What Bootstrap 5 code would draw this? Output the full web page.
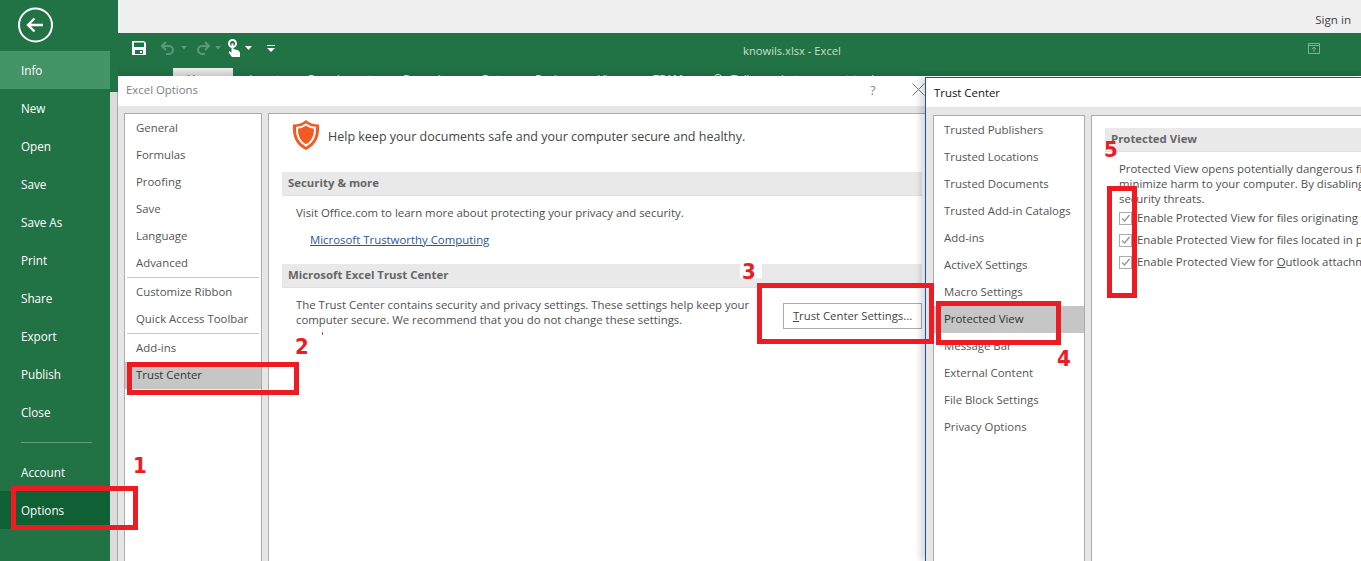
<!DOCTYPE html>
<html lang="en">
<head>
<meta charset="utf-8">
<title>Excel Options - Trust Center</title>
<link href="https://cdn.jsdelivr.net/npm/bootstrap@5.3.0/dist/css/bootstrap.min.css" rel="stylesheet">
<style>
html,body{height:100%;overflow:hidden;background:#fff}
body{font-family:"Open Sans","Noto Sans",sans-serif;font-size:11.4px;color:#444}
.xl-app{width:1361px;height:561px;overflow:hidden}
.xl-side{width:110px;background:#217346;color:#fff}
.xl-back{height:51px;padding-left:17px}
.xl-menu{height:38px;line-height:38px;padding:0 0 0 21px;color:#fff;font-size:11.7px}
.xl-menu-on{background:#439467}
.xl-menu-sel{background:#0f6034}
.xl-rule{height:1px;background:#5f9f7c;margin:11px 18px 10px 21px}
.xl-strip{width:8px}
.xl-strip-top{height:92px;background:#217346}
.xl-strip-low{flex:1;background:#dcdcdc;border-right:1px solid #a8a8a8}
.xl-top{height:33px;background:#f0f0f0;padding:0 10px 5px 0;color:#444;font-size:11.6px}
.xl-title{height:35px;background:#217346;padding:0 0 5px 13px}
.xl-doc{left:743px;top:43px;color:#c9dfd1;font-size:11.2px}
.xl-q1{margin-left:13px}
.xl-q2{margin-left:5px}
.xl-q3{margin-left:8px}
.xl-q4{margin-left:4px}
.xl-q5{margin-left:6px}
.xl-q6{margin-left:15px;margin-top:2px}
.xl-ribbon{height:8px;background:linear-gradient(#217346,#1d683f);overflow:hidden;font-size:11.4px;color:#d6e6dc;padding-left:55px}
.xl-tab{height:8px;line-height:22px;flex:0 0 auto}
.xl-tab-on{background:linear-gradient(#ececec,#c9c9c9);color:#444;width:60px;text-align:center;margin-right:16px}
.xl-t59{width:59px}
.xl-t95{width:95px}
.xl-t79{width:79px}
.xl-t53{width:53px}
.xl-t63{width:63px}
.xl-t55{width:55px}
.xl-search{width:10px;height:10px;border:1px solid #d6e6dc;border-radius:50%;margin:6px 8px 0 1px;flex:0 0 auto}
.xl-win{position:absolute;background:#e6e6e6;overflow:hidden}
.xl-opt{left:118px;top:76px;width:808px;height:485px}
.xl-tc{left:925px;top:77px;width:436px;height:484px;border-left:1px solid #1c4fa8;border-top:1px solid #1c4fa8;box-shadow:-5px 0 6px rgba(0,0,0,.14)}
.xl-bar{height:30px;background:#fff;padding-left:8px}
.xl-bar-opt{color:#7d7d8a;padding-bottom:2px}
.xl-bar-tc{height:29px;color:#111;padding-left:8px}
.xl-help{left:752px;top:5px;color:#8a8a8a;font-size:13px}
.xl-close{left:794px;top:7px}
.xl-body{height:100%;padding:7px 0 0 6px;gap:6px}
.xl-body-tc{padding:8px 0 0 7px}
.xl-list{width:138px;background:#fff;border:1px solid #ababab;border-bottom:0;padding-top:.5px}
.xl-list-tc{width:152px;padding-top:.5px}
.xl-list .list-group-item{height:27px;line-height:25px;padding:0 0 0 11px;border:0;background:transparent;color:#555;font-size:11.4px;border-radius:0}
.xl-list .list-group-item.active{background:#c6c6c6;color:#333;margin:0}
.xl-list-tc .list-group-item{padding-left:10px}
.xl-sep{height:1px;background:#c6c6c6;margin:0 2px 1px}
.xl-pane{width:660px;background:#fff;border:1px solid #ababab;border-bottom:0;border-right:0;padding:0 0 0 13px;flex:0 0 auto}
.xl-pane-tc{width:300px;flex:1 1 auto;padding-top:12px;overflow:hidden}
.xl-head{height:30px;margin:6px 0 0 10px;gap:8px;font-size:12.5px;color:#444}
.xl-head span{padding-top:4px}
.xl-band{height:24px;line-height:22px;background:#e9e9e9;border-bottom:1px solid #e0e0e0;padding-left:6px;font-weight:700;color:#666;width:640px}
.xl-gap-a{margin-top:22px}
.xl-gap-b{margin-top:15px}
.xl-txt{margin-left:14px;line-height:18px;color:#505050}
.xl-txt-a{margin-top:8px}
.xl-link{display:block;margin:9px 0 0 28px;line-height:18px;color:#2b579a}
.xl-row{margin:9px 0 0 14px;width:626px;height:32px}
.xl-row p{line-height:15px;width:470px;color:#505050}
.xl-btn{width:139px;height:26px;margin-top:6px;padding:0;font-size:11.3px;border:1px solid #ababab;border-radius:0;background:#fff;color:#444;white-space:nowrap}
.xl-tc-band{padding-left:6px;margin-bottom:9px;width:auto}
.xl-tc-txt{line-height:15px;margin-left:14px;white-space:nowrap;color:#505050}
.xl-chk{height:22px;margin-left:14px;padding-top:2px;gap:5px;white-space:nowrap;color:#505050}
.xl-chk svg{flex:0 0 13px}
.xl-mark{position:absolute;border:5px solid #ed1c24;background:transparent;z-index:5}
.xl-num{position:absolute;z-index:6;color:#ed1c24;font:700 22px/22px "DejaVu Sans",sans-serif;font-stretch:condensed}
.xl-num-w{background:#fff;width:22px;height:15px;line-height:17px;padding-left:2px;overflow:visible}
.xl-tick{position:absolute;left:322px;top:332px;width:1px;height:3px;background:#666;z-index:4}
.xl-m1{left:11px;top:486px;width:127px;height:44px}
.xl-m2{left:127px;top:362px;width:172px;height:33px}
.xl-m3{left:757px;top:283px;width:177px;height:61px}
.xl-m4{left:936px;top:301px;width:125px;height:44px}
.xl-m5{left:1107px;top:186px;width:30px;height:112px}
.xl-n1{left:133px;top:455px}
.xl-n2{left:295px;top:336px}
.xl-n3{left:740px;top:263px}
.xl-n4{left:1057px;top:348px}
.xl-n5{left:1104px;top:139px}
</style>
</head>
<body>
<div class="xl-app d-flex position-relative">
  <aside class="xl-side d-flex flex-column flex-shrink-0">
    <div class="xl-back d-flex align-items-center">
      <svg width="37" height="37" viewBox="0 0 37 37" fill="none" stroke="#fff" aria-hidden="true"><circle cx="18.5" cy="18" r="16.5" stroke-width="2"/><path d="M11 18h15M17.5 11.5 11 18l6.5 6.5" stroke-width="2.4"/></svg>
    </div>
    <div class="xl-menu xl-menu-on">Info</div>
    <div class="xl-menu">New</div>
    <div class="xl-menu">Open</div>
    <div class="xl-menu">Save</div>
    <div class="xl-menu">Save As</div>
    <div class="xl-menu">Print</div>
    <div class="xl-menu">Share</div>
    <div class="xl-menu">Export</div>
    <div class="xl-menu">Publish</div>
    <div class="xl-menu">Close</div>
    <div class="xl-rule"></div>
    <div class="xl-menu">Account</div>
    <div class="xl-menu xl-menu-sel">Options</div>
  </aside>
  <div class="xl-strip d-flex flex-column flex-shrink-0">
    <div class="xl-strip-top"></div>
    <div class="xl-strip-low"></div>
  </div>
  <main class="flex-grow-1 position-relative">
    <div class="xl-top d-flex justify-content-end align-items-end">Sign in</div>
    <div class="xl-title d-flex align-items-center">
      <svg width="16" height="16" viewBox="0 0 16 16" aria-hidden="true"><path fill="#fff" d="M1 1h12l2 2v12H1zM3 2.500v4.500h10V2.500zM4 10v4h8v-4zM9 11h2v2H9z" fill-rule="evenodd"/></svg>
      <svg class="xl-q1" width="16" height="16" viewBox="0 0 16 16" fill="none" stroke="#5a9a78" stroke-width="2" aria-hidden="true"><path d="M6 2 2 6l4 4M2 6h7a4 4 0 0 1 0 8H6"/></svg>
      <svg class="xl-q2" width="6" height="4" viewBox="0 0 6 4" aria-hidden="true"><path fill="#5a9a78" d="M0 0h6L3 3.500z"/></svg>
      <svg class="xl-q3" width="16" height="16" viewBox="0 0 16 16" fill="none" stroke="#5a9a78" stroke-width="2" aria-hidden="true"><path d="m10 2 4 4-4 4m4-4H7a4 4 0 0 0 0 8h3"/></svg>
      <svg class="xl-q4" width="6" height="4" viewBox="0 0 6 4" aria-hidden="true"><path fill="#5a9a78" d="M0 0h6L3 3.500z"/></svg>
      <svg class="xl-q5" width="14" height="18" viewBox="0 0 14 18" aria-hidden="true"><circle cx="5.500" cy="4.500" r="3.500" fill="none" stroke="#fff" stroke-width="2"/><path fill="#fff" d="M4.500 4.500h2V10l5 1.500 1.500 2V18H5l-3-4V12l2.500 1.500z"/></svg>
      <svg class="xl-q4" width="7" height="4" viewBox="0 0 7 4" aria-hidden="true"><path fill="#fff" d="M0 0h7L3.500 4z"/></svg>
      <svg class="xl-q6" width="8" height="8" viewBox="0 0 8 8" aria-hidden="true"><path fill="#fff" d="M0 0h8v1H0zM0 3h8L4 7z"/></svg>
    </div>
    <div class="xl-ribbon d-flex">
      <div class="xl-tab xl-tab-on">Home</div>
      <div class="xl-tab xl-t59">Insert</div>
      <div class="xl-tab xl-t95">Page Layout</div>
      <div class="xl-tab xl-t79">Formulas</div>
      <div class="xl-tab xl-t53">Data</div>
      <div class="xl-tab xl-t63">Review</div>
      <div class="xl-tab xl-t55">View</div>
      <div class="xl-tab xl-t59">TEAM</div>
      <span class="xl-search"></span>
      <div class="xl-tab">Tell me what you want to do</div>
    </div>
  </main>

  <span class="xl-doc position-absolute">knowils.xlsx - Excel</span>
  <svg class="position-absolute" style="left:1308px;top:43px" width="12" height="11" viewBox="0 0 12 11" fill="none" stroke="#7fb096" aria-hidden="true"><path d="M.5.500h11v10H.5zM.5 2.500h11M6 9V4.500M4 6l2-2 2 2"/></svg>

  <section class="xl-win xl-opt d-flex flex-column">
    <div class="xl-bar xl-bar-opt d-flex align-items-center flex-shrink-0 position-relative">Excel Options
      <span class="xl-help position-absolute">?</span>
      <svg class="xl-close position-absolute" width="13" height="13" viewBox="0 0 13 13" stroke="#777" aria-hidden="true"><path d="m.5.500 12 12m0-12-12 12"/></svg>
    </div>
    <div class="xl-body d-flex">
      <div class="xl-list list-group list-group-flush flex-shrink-0">
        <a class="list-group-item">General</a>
        <a class="list-group-item">Formulas</a>
        <a class="list-group-item">Proofing</a>
        <a class="list-group-item">Save</a>
        <a class="list-group-item">Language</a>
        <a class="list-group-item">Advanced</a>
        <div class="xl-sep"></div>
        <a class="list-group-item">Customize Ribbon</a>
        <a class="list-group-item">Quick Access Toolbar</a>
        <div class="xl-sep"></div>
        <a class="list-group-item">Add-ins</a>
        <a class="list-group-item active">Trust Center</a>
      </div>
      <div class="xl-pane">
        <div class="xl-head d-flex align-items-center">
          <svg width="28" height="30" viewBox="0 0 28 30" aria-hidden="true"><path fill="#f25a22" d="M14 0c3 3 8 4.500 13 4.500C28 17 24 25 14 30 4 25 0 17 1 4.500 6 4.500 11 3 14 0z"/><path fill="none" stroke="#fff" stroke-width="2" d="M14 4.500c2.500 2 5.500 3 9 3.200C23.500 16 20.500 22 14 25.500 7.500 22 4.500 16 5 7.700c3.500-.2 6.500-1.200 9-3.200z"/></svg>
          <span>Help keep your documents safe and your computer secure and healthy.</span>
        </div>
        <div class="xl-band xl-gap-a">Security &amp; more</div>
        <div class="xl-txt xl-txt-a">Visit Office.com to learn more about protecting your privacy and security.</div>
        <a class="xl-link" href="#">Microsoft Trustworthy Computing</a>
        <div class="xl-band xl-gap-b">Microsoft Excel Trust Center</div>
        <div class="xl-row d-flex justify-content-between">
          <p class="mb-0">The Trust Center contains security and privacy settings. These settings help keep your computer secure. We recommend that you do not change these settings.</p>
          <button type="button" class="btn xl-btn"><u>T</u>rust Center Settings...</button>
        </div>
      </div>
    </div>
  </section>

  <section class="xl-win xl-tc d-flex flex-column">
    <div class="xl-bar xl-bar-tc d-flex align-items-center flex-shrink-0">Trust Center</div>
    <div class="xl-body xl-body-tc d-flex">
      <div class="xl-list xl-list-tc list-group list-group-flush flex-shrink-0">
        <a class="list-group-item">Trusted Publishers</a>
        <a class="list-group-item">Trusted Locations</a>
        <a class="list-group-item">Trusted Documents</a>
        <a class="list-group-item">Trusted Add-in Catalogs</a>
        <a class="list-group-item">Add-ins</a>
        <a class="list-group-item">ActiveX Settings</a>
        <a class="list-group-item">Macro Settings</a>
        <a class="list-group-item active">Protected View</a>
        <a class="list-group-item">Message Bar</a>
        <a class="list-group-item">External Content</a>
        <a class="list-group-item">File Block Settings</a>
        <a class="list-group-item">Privacy Options</a>
      </div>
      <div class="xl-pane xl-pane-tc">
        <div class="xl-band xl-tc-band">Protected View</div>
        <div class="xl-tc-txt">Protected View opens potentially dangerous files, without security prompts, in a restricted mode</div>
        <div class="xl-tc-txt">minimize harm to your computer. By disabling Protected View, you could be exposing your computer</div>
        <div class="xl-tc-txt">security threats.</div>
        <div class="xl-chk d-flex align-items-center"><svg width="13" height="13" viewBox="0 0 13 13" fill="none" aria-hidden="true"><rect x=".5" y=".5" width="12" height="12" stroke="#ababab"/><path d="m3 6.500 2.500 2.500 5-6" stroke="#999" stroke-width="1.500"/></svg><span>Enable Protected View for files originating from the Internet</span></div>
        <div class="xl-chk d-flex align-items-center"><svg width="13" height="13" viewBox="0 0 13 13" fill="none" aria-hidden="true"><rect x=".5" y=".5" width="12" height="12" stroke="#ababab"/><path d="m3 6.500 2.500 2.500 5-6" stroke="#999" stroke-width="1.500"/></svg><span>Enable Protected View for files located in potentially unsafe locations</span></div>
        <div class="xl-chk d-flex align-items-center"><svg width="13" height="13" viewBox="0 0 13 13" fill="none" aria-hidden="true"><rect x=".5" y=".5" width="12" height="12" stroke="#ababab"/><path d="m3 6.500 2.500 2.500 5-6" stroke="#999" stroke-width="1.500"/></svg><span>Enable Protected View for <u>O</u>utlook attachments</span></div>
      </div>
    </div>
  </section>

  <i class="xl-tick"></i>
  <div class="xl-mark xl-m1"></div>
  <div class="xl-mark xl-m2"></div>
  <div class="xl-mark xl-m3"></div>
  <div class="xl-mark xl-m4"></div>
  <div class="xl-mark xl-m5"></div>
  <span class="xl-num xl-n1">1</span>
  <span class="xl-num xl-n2">2</span>
  <span class="xl-num xl-num-w xl-n3">3</span>
  <span class="xl-num xl-n4">4</span>
  <span class="xl-num xl-n5">5</span>
</div>
<script src="https://cdn.jsdelivr.net/npm/bootstrap@5.3.0/dist/js/bootstrap.bundle.min.js"></script>
</body>
</html>
